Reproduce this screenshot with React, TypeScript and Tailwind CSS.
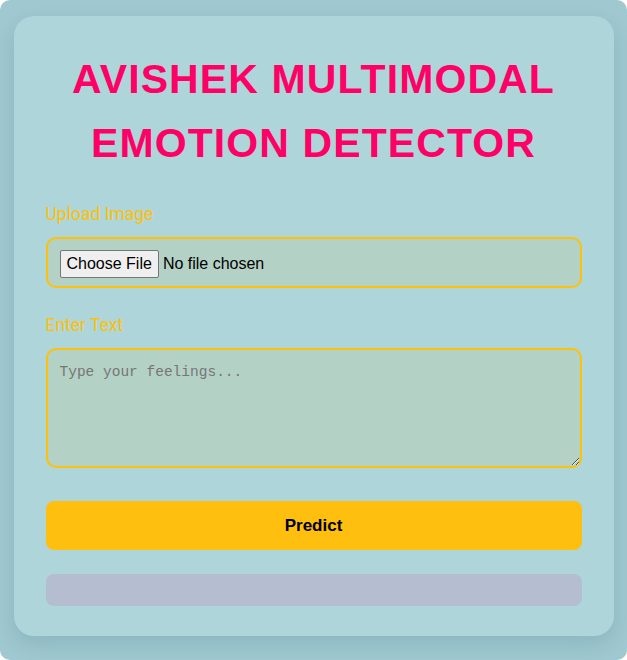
import React from "react";

export default function App() {
  return (
    <div className="min-h-[660px] w-full rounded-[10px] bg-[#9fc8d0] pt-[16px] pb-[24px] font-['Liberation_Sans',Arial,sans-serif]">
      <div className="mx-auto w-[600px] rounded-[20px] bg-[#add5da] px-[32px] pt-[31px] pb-[30px] shadow-[0_8px_20px_rgba(0,60,80,0.12)]">
        <h1 className="text-center text-[41px] font-bold leading-[64px] tracking-[1.1px] text-[#ff0066]">
          AVISHEK MULTIMODAL
          <br />
          EMOTION DETECTOR
        </h1>

        <label className="mt-[27px] mb-[11px] block h-[24px] text-[17.5px] leading-[24px] text-[#ffc107] font-['Roboto',sans-serif]">
          Upload Image
        </label>
        <div className="h-[51px] rounded-[10px] border-2 border-[#ffc107] bg-[#b4d1c5] px-[12px] pt-[11px]">
          <input
            type="file"
            className="text-[16px] text-black font-['Liberation_Sans',Arial,sans-serif] file:mr-[4px] file:rounded-[2px] file:border file:border-solid file:border-[#767676] file:bg-[#efefef] file:px-[6px] file:py-[1px] file:text-[16px] file:text-black"
          />
        </div>

        <label className="mt-[25px] mb-[11px] block h-[24px] text-[17.5px] leading-[24px] text-[#ffc107] font-['Roboto',sans-serif]">
          Enter Text
        </label>
        <textarea
          placeholder="Type your feelings..."
          className="block h-[120px] w-full resize-y rounded-[10px] border-2 border-[#ffc107] bg-[#b4d1c5] px-[12px] py-[12px] text-[14.5px] font-['Liberation_Mono',monospace] placeholder:text-[#767676] outline-none"
        />

        <button className="mt-[33px] block h-[49px] w-full rounded-[8px] bg-[#ffbf0f] text-[17px] font-bold text-black font-['Liberation_Sans',Arial,sans-serif]">
          Predict
        </button>

        <div className="mt-[24px] h-[32px] w-full rounded-[8px] bg-[#b5bed0]" />
      </div>
    </div>
  );
}
